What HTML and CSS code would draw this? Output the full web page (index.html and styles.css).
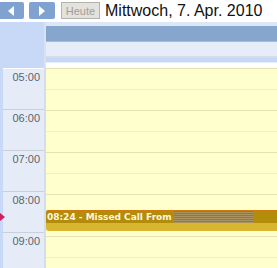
FILE: index.html
```html
<!DOCTYPE html>
<html lang="de">
<head>
  <meta charset="UTF-8">
  <title>Tagesansicht</title>
  <link rel="stylesheet" href="styles.css">
</head>
<body>

  <div class="toolbar">
    <button class="nav"><svg width="8" height="10" viewBox="0 0 8 10"><polygon points="7,0 7,10 1,5" fill="#fff"/></svg></button>
    <button class="nav"><svg width="8" height="10" viewBox="0 0 8 10"><polygon points="1,0 1,10 7,5" fill="#fff"/></svg></button>
    <button class="today">Heute</button>
    <span class="date">Mittwoch, 7. Apr. 2010</span>
  </div>

  <div class="header">
    <div class="corner"></div>
    <div class="allday">
      <div class="band-top"></div>
      <div class="band-dark"></div>
      <div class="band-light"></div>
      <div class="band-line"></div>
      <div class="band-blue"></div>
    </div>
  </div>

  <div class="grid">
    <div class="edge"></div>
    <div class="times">
      <div class="hour">05:00</div>
      <div class="hour">06:00</div>
      <div class="hour">07:00</div>
      <div class="hour">08:00</div>
      <div class="hour">09:00</div>
    </div>
    <div class="day">
      <div class="slot"></div><div class="slot"></div>
      <div class="slot"></div><div class="slot"></div>
      <div class="slot"></div><div class="slot"></div>
      <div class="slot"></div><div class="slot"></div>
      <div class="slot"></div><div class="slot"></div>

      <div class="event">
        <div class="event-title">08:24 - Missed Call From<span class="blur"></span></div>
        <div class="event-body"></div>
      </div>
    </div>
    <div class="now"></div>
  </div>

</body>
</html>
```

FILE: styles.css
```css
body {
  margin: 0;
  background-color: white;
  font-family: "Liberation Sans", Arial, sans-serif;
  overflow: hidden;
  width: 277px;
  height: 268px;
}
.toolbar {
  display: flex;
  align-items: center;
  height: 21px;
  margin-left: -2px;
}
.nav {
  width: 26px;
  height: 17px;
  margin-right: 5px;
  padding: 0;
  border: none;
  border-radius: 2px;
  background-color: #7fa2d0;
  display: flex;
  align-items: center;
  justify-content: center;
}
.today {
  width: 39px;
  height: 17px;
  margin-left: 1px;
  padding: 0;
  border: 1px solid #b4b2ac;
  background-color: #e4e2dc;
  color: #a09e98;
  font-family: "Liberation Sans", Arial, sans-serif;
  font-size: 11px;
}
.date {
  margin-left: 5px;
  font-size: 16px;
  color: #111;
}
.header {
  display: flex;
  height: 46px;
  margin-top: 1px;
}
.corner {
  width: 44px;
  background-color: #c7d9f7;
  border-right: 2px solid #d8e2f0;
}
.allday {
  flex: 1;
  display: flex;
  flex-direction: column;
}
.band-top {
  height: 4px;
  background-color: #dde6f4;
}
.band-dark {
  height: 15px;
  background-color: #87a6cd;
  border-bottom: 1px solid #a8bcd8;
}
.band-light {
  height: 14px;
  background-color: #e6ecf8;
}
.band-line {
  height: 2px;
  background-color: #d4dcec;
}
.band-blue {
  height: 4px;
  background-color: #c8d7f7;
  border-bottom: 1px solid #e8eef8;
}
.grid {
  display: flex;
  position: relative;
}
.edge {
  width: 3px;
  background-color: #c7d9f7;
}
.times {
  width: 41px;
  background-color: #e6ecf7;
  border-right: 2px solid #d5dde9;
}
.hour {
  height: 41px;
  border-top: 1px solid #c9d0dc;
  font-size: 11px;
  color: #5a6470;
  text-align: right;
  padding-right: 4px;
  padding-top: 2px;
  box-sizing: border-box;
}
.hour:first-child {
  border-top-color: #ffffff;
}
.day {
  flex: 1;
  position: relative;
  background-color: #ffffcd;
}
.slot {
  height: 20px;
  border-top: 1px solid #efefbf;
}
.slot:nth-child(odd) {
  border-top-color: #e2e2b2;
}
.event {
  position: absolute;
  left: 0;
  right: 0;
  top: 142px;
  height: 21px;
  border-radius: 3px 0 0 3px;
  overflow: hidden;
  background-color: #d9b62f;
}
.event-title {
  height: 12px;
  background-color: #b48c0c;
  border-top: 1px solid #d07a10;
  color: #fff6d8;
  font-family: Verdana, "DejaVu Sans", sans-serif;
  font-size: 9px;
  font-weight: bold;
  line-height: 12px;
  padding-left: 1px;
  white-space: nowrap;
  display: flex;
  align-items: center;
}
.blur {
  display: inline-block;
  width: 80px;
  height: 12px;
  margin-left: 2px;
  background: repeating-linear-gradient(#8d7a4a 0, #8d7a4a 1px, #a99360 1px, #a99360 2px);
}
.now {
  position: absolute;
  left: 0;
  top: 145px;
  width: 0;
  height: 0;
  border-top: 4px solid transparent;
  border-bottom: 4px solid transparent;
  border-left: 5px solid #d0205a;
}
```
